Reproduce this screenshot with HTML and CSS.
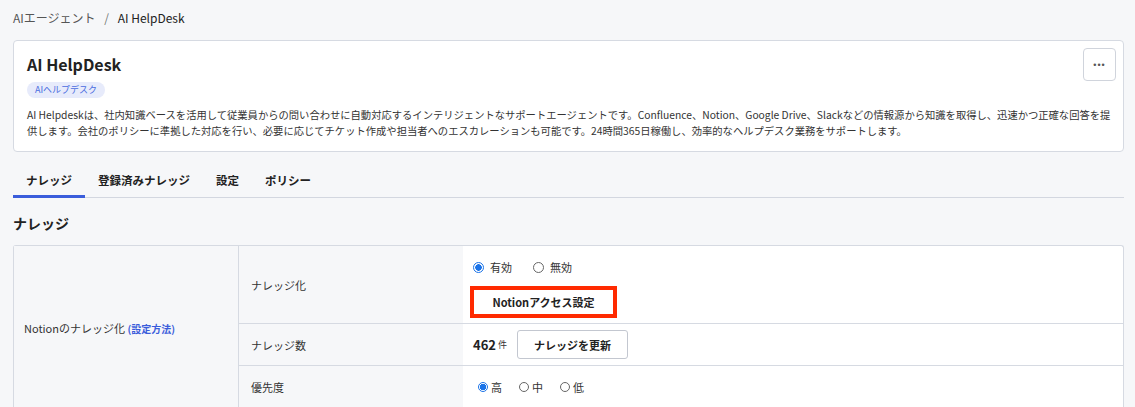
FILE: index.html
```html
<!DOCTYPE html>
<html lang="ja">
<head>
    <meta charset="UTF-8">
    <title>AI HelpDesk - AIエージェント</title>
    <link rel="stylesheet" href="styles.css">
</head>
<body>
    <!-- Breadcrumb -->
    <div class="breadcrumb">
        <span class="crumb">AIエージェント</span>
        <span class="sep">/</span>
        <span class="crumb current">AI HelpDesk</span>
    </div>

    <!-- Agent card -->
    <div class="card">
        <div class="card-head">
            <div class="card-title">
                <h1>AI HelpDesk</h1>
                <span class="badge">AIヘルプデスク</span>
            </div>
            <button class="more-btn">•••</button>
        </div>
        <p class="desc">AI Helpdeskは、社内知識ベースを活用して従業員からの問い合わせに自動対応するインテリジェントなサポートエージェントです。Confluence、Notion、Google Drive、Slackなどの情報源から知識を取得し、迅速かつ正確な回答を提供します。会社のポリシーに準拠した対応を行い、必要に応じてチケット作成や担当者へのエスカレーションも可能です。24時間365日稼働し、効率的なヘルプデスク業務をサポートします。</p>
    </div>

    <!-- Tabs -->
    <ul class="tabs">
        <li class="active">ナレッジ</li>
        <li>登録済みナレッジ</li>
        <li>設定</li>
        <li>ポリシー</li>
    </ul>

    <h2>ナレッジ</h2>

    <!-- Settings table -->
    <div class="table">
        <div class="group">Notionのナレッジ化 <a href="#">(設定方法)</a></div>
        <div class="rows">
            <div class="row row-tall">
                <div class="label">ナレッジ化</div>
                <div class="value stack">
                    <div class="radios">
                        <label class="radio"><span class="dot on"></span>有効</label>
                        <label class="radio"><span class="dot"></span>無効</label>
                    </div>
                    <div class="highlight">
                        <button class="plain-btn">Notionアクセス設定</button>
                    </div>
                </div>
            </div>
            <div class="row">
                <div class="label">ナレッジ数</div>
                <div class="value">
                    <span class="count">462</span><span class="unit">件</span>
                    <button class="btn">ナレッジを更新</button>
                </div>
            </div>
            <div class="row">
                <div class="label">優先度</div>
                <div class="value">
                    <div class="radios small">
                        <label class="radio"><span class="dot on"></span>高</label>
                        <label class="radio"><span class="dot"></span>中</label>
                        <label class="radio"><span class="dot"></span>低</label>
                    </div>
                </div>
            </div>
        </div>
    </div>
</body>
</html>
```

FILE: styles.css
```css
/* Page */
html {
    font-family: "Noto Sans CJK JP", "Noto Sans", sans-serif;
}

body {
    margin: 0;
    padding: 0 11px 0 13px;
    background-color: #f6f7f9;
    color: #222;
}

.breadcrumb {
    font-size: 12px;
    color: #555;
    height: 40px;
    line-height: 36px;
}

.breadcrumb .sep {
    margin: 0 6px;
    color: #777;
}

.breadcrumb .current {
    color: #222;
}

/* Agent card */
.card {
    background-color: #fff;
    border: 1px solid #d6dae2;
    border-radius: 4px;
    padding: 6px 7px 12px 13px;
    height: 92px;
}

.card-head {
    display: flex;
    justify-content: space-between;
    align-items: flex-start;
}

.card-title {
    display: flex;
    flex-direction: column;
    align-items: flex-start;
}

.card h1 {
    margin: 5px 0 6px;
    font-size: 16px;
    font-weight: bold;
    line-height: 24px;
}

.badge {
    display: block;
    background-color: #e7ebfb;
    color: #4a6ce0;
    font-size: 9px;
    line-height: 16px;
    padding: 0 8px;
    border-radius: 8px;
}

.more-btn {
    width: 33px;
    height: 33px;
    margin-top: 1px;
    background: #fff;
    border: 1px solid #d0d4dc;
    border-radius: 4px;
    font-size: 9px;
    letter-spacing: 1px;
    color: #555;
    padding: 0;
    cursor: pointer;
}

.desc {
    margin: 9px 0 0;
    font-size: 10.3px;
    line-height: 16px;
    color: #333;
}

/* Tabs */
.tabs {
    display: flex;
    margin: 15px 0 0;
    padding: 0;
    list-style: none;
    border-bottom: 1px solid #d3d7e0;
}

.tabs li {
    font-size: 11.5px;
    font-weight: bold;
    padding: 0 13px 2px;
    line-height: 26px;
    margin-bottom: -1px;
    border-bottom: 3px solid transparent;
}

.tabs li.active {
    border-bottom-color: #3a5ddb;
}

h2 {
    font-size: 14px;
    font-weight: bold;
    margin: 14px 0 0;
    line-height: 22px;
}

/* Table */
.table {
    display: flex;
    margin-top: 11px;
    border: 1px solid #d6dae2;
    border-bottom: none;
    border-radius: 3px 3px 0 0;
    background-color: #fff;
    font-size: 11px;
}

.group {
    width: 214px;
    flex: none;
    background-color: #f6f7f9;
    border-right: 1px solid #d6dae2;
    padding: 74px 0 0 10px;
    color: #333;
}

.group a {
    color: #3a5ddb;
    font-size: 10px;
    font-weight: bold;
    text-decoration: none;
}

.rows {
    flex: 1;
}

.row {
    display: flex;
    height: 41px;
    border-bottom: 1px solid #d6dae2;
}

.row-tall {
    height: 77px;
}

.label {
    width: 212px;
    flex: none;
    background-color: #f6f7f9;
    padding-left: 12px;
    display: flex;
    align-items: center;
    color: #333;
}

.value {
    display: flex;
    align-items: center;
    padding-left: 10px;
}

.value.stack {
    flex-direction: column;
    align-items: flex-start;
    justify-content: flex-start;
    padding-top: 13px;
    padding-left: 7px;
}

.radios {
    display: flex;
    gap: 21px;
    padding-left: 3px;
    line-height: 16px;
}

.radio {
    display: flex;
    align-items: center;
    gap: 6px;
    color: #333;
}

.dot {
    width: 11px;
    height: 11px;
    border: 1px solid #666;
    border-radius: 50%;
    background: #fff;
    box-sizing: border-box;
}

.dot.on {
    border: 1px solid #1a73e8;
    background: radial-gradient(circle, #1a73e8 0 3px, #fff 3.5px);
}

.radios.small {
    gap: 17px;
    padding-left: 5px;
}

.radios.small .radio {
    gap: 3px;
}

.radios.small .dot {
    width: 10px;
    height: 10px;
}

.highlight {
    margin-top: 11px;
    border: 4px solid #ff2a00;
    width: 139px;
    height: 24px;
    display: flex;
}

.plain-btn {
    flex: 1;
    background: #fff;
    border: none;
    font-family: inherit;
    font-size: 11px;
    font-weight: bold;
    color: #222;
    padding: 0;
}

.count {
    font-size: 13px;
    font-weight: bold;
}

.unit {
    font-size: 9px;
    margin-left: 2px;
    color: #333;
}

.btn {
    margin-left: 10px;
    height: 29px;
    width: 111px;
    background: #fff;
    border: 1px solid #c3c7d0;
    border-radius: 3px;
    font-family: inherit;
    font-size: 11px;
    font-weight: bold;
    color: #222;
    cursor: pointer;
}
```
